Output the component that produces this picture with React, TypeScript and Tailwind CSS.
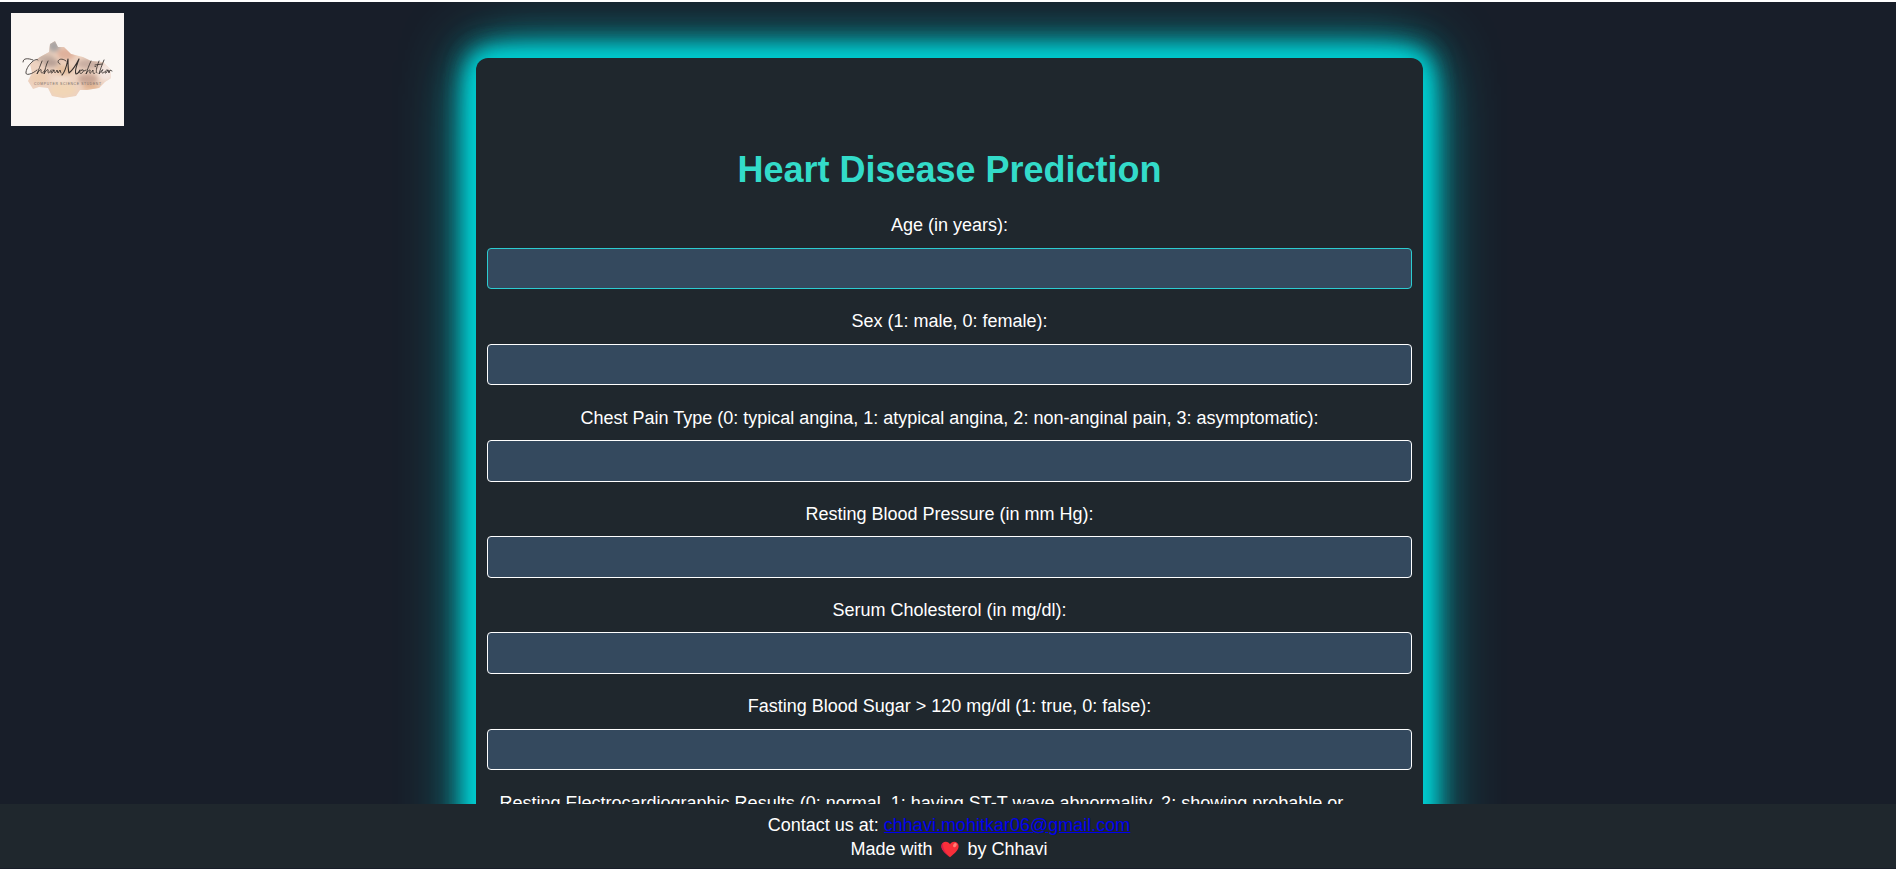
const fields = [
  'Age (in years):',
  'Sex (1: male, 0: female):',
  'Chest Pain Type (0: typical angina, 1: atypical angina, 2: non-anginal pain, 3: asymptomatic):',
  'Resting Blood Pressure (in mm Hg):',
  'Serum Cholesterol (in mg/dl):',
  'Fasting Blood Sugar > 120 mg/dl (1: true, 0: false):',
];

function Logo() {
  return (
    <svg viewBox="0 0 113 113" className="block h-[113px] w-[113px]" aria-label="Chhavi Mohitkar">
      <defs>
        <filter id="soft" x="-20%" y="-20%" width="140%" height="140%"><feGaussianBlur stdDeviation="2" /></filter>
        <filter id="edge"><feGaussianBlur stdDeviation="0.6" /></filter>
        <clipPath id="blob"><path d="M17 68 L21 60 L19 51 L29 44 L38 39 L39 31 L44 28 L47 34 L53 34 L60 41 L72 44 L80 48 L92 49 L99 56 L100 65 L94 69 L88 75 L76 77 L69 77 L65 83 L52 85 L41 83 L37 75 L28 74 L22 76 Z" /></clipPath>
      </defs>
      <rect width="113" height="113" fill="#faf6f3" />
      <g filter="url(#edge)"><g clipPath="url(#blob)">
        <rect width="113" height="113" fill="#edd2c0" />
        <g filter="url(#soft)">
          <ellipse cx="43" cy="33" rx="6" ry="6" fill="#a9a4a3" />
          <ellipse cx="34" cy="45" rx="10" ry="4" fill="#c9b3a6" />
          <ellipse cx="55" cy="41" rx="9" ry="6" fill="#dfb19b" />
          <ellipse cx="40" cy="50" rx="8" ry="4" fill="#b8a095" />
          <ellipse cx="78" cy="51" rx="12" ry="5" fill="#c9aea2" />
          <ellipse cx="53" cy="57" rx="8" ry="5" fill="#e4bf9f" />
          <ellipse cx="95" cy="59" rx="8" ry="9" fill="#f4e6e0" />
          <ellipse cx="28" cy="65" rx="9" ry="6" fill="#edceb2" />
          <ellipse cx="50" cy="66" rx="10" ry="3" fill="#f3dfd0" />
          <ellipse cx="77" cy="66" rx="10" ry="5" fill="#c8a594" />
          <ellipse cx="80" cy="74" rx="9" ry="3" fill="#e2b28e" />
          <ellipse cx="52" cy="77" rx="13" ry="7" fill="#f1d5b5" />
        </g>
      </g></g>
      <g fill="none" stroke="#342e2c" strokeWidth="0.85" strokeLinecap="round" strokeLinejoin="round">
        <path d="M12 49 C12 45 17 45 22 47 M27 47 C25 44 16 52 15 59 C14 64 23 60 26 57" />
        <path d="M31 48 C29 52 28 57 26 61 C28 57 31 55 30 58 C30 62 33 59 34 57 M37 48 C35 52 34 57 33 61 C35 57 38 55 37 58 C37 62 39 59 40 57 M43 57 C40 56 39 61 41 60 L43 57 C43 61 45 60 46 57 L47 60 L49 57 L50 60" />
        <path d="M55 48 C49 43 44 49 49 51" />
        <path strokeWidth="1.1" d="M51 62 C55 58 56 50 57 46 C57 52 57 57 58 60 C62 57 66 50 68 46 C66 52 63 58 65 61 C67 61 68 59 69 57" />
        <path d="M71 57 C68 57 68 62 71 60 C73 58 73 56 71 57 M73 58 L75 57 M80 48 C78 52 76 58 75 61 C77 57 80 56 79 58 C78 62 80 60 82 57 C82 59 82 62 84 60 M84 53.5 L84.5 53.5 M88 48 C86 53 84 60 86 60 M84 52 L91 51 M93 47 C91 52 89 57 88 61 C91 57 93 55 91 58 C90 59 92 62 93 59 M97 57 C94 56 93 61 95 60 L97 57 L98 60 L99 57 L101 58" />
      </g>
      <text x="23" y="71.5" textLength="67" fontSize="3.4" fontFamily="Liberation Sans, sans-serif" fill="#756b66">COMPUTER SCIENCE STUDENT</text>
    </svg>
  );
}

function Heart() {
  return (
    <svg viewBox="0 0 18 17" className="mx-[8.5px] inline-block h-[17px] w-[18px] align-[-3px]" aria-label="love">
      <path d="M9 16.2 C6 13.7 0.4 9.6 0.4 5.2 C0.4 2.4 2.4 0.7 4.8 0.7 C6.7 0.7 8.2 1.6 9 3.3 C9.8 1.6 11.3 0.7 13.2 0.7 C15.6 0.7 17.6 2.4 17.6 5.2 C17.6 9.6 12 13.7 9 16.2Z" fill="#f92f3a" />
      <path d="M9 16.2 C6 13.7 0.4 9.6 0.4 5.2 C0.4 3.4 1.2 2 2.4 1.4 C0.6 6 5 12.5 9 16.2Z" fill="#d81e4a" />
      <ellipse cx="13.9" cy="4.1" rx="1.6" ry="2.3" transform="rotate(35 13.9 4.1)" fill="#ff8178" />
    </svg>
  );
}

export default function App() {
  return (
    <div className="flex h-[869px] flex-col overflow-hidden border-t-2 border-white bg-[#181e29] font-['Liberation_Sans',Arial,sans-serif] text-[18px] text-white">
      <div className="flex min-h-0 flex-1 items-start overflow-hidden">
        <header className="w-[476px] shrink-0 pt-[11px] pl-[11px]"><Logo /></header>
        <main className="mt-14 h-[1500px] w-[947px] shrink-0 rounded-xl bg-[#1f272d] px-[11px] pt-[90px] text-center shadow-[0_0_20px_#00ced1,0_0_30px_#00ced1,0_0_30px_#00ced1,0_0_40px_#00ced1,0_0_70px_#00ced1]">
          <h1 className="text-[36px] leading-[44px] font-bold text-[#33dbc9]">Heart Disease Prediction</h1>
          <form className="mt-[22.3px]">
            {fields.map((label, i) => (
              <label key={label} className="block h-[96.2px]">
                <span className="block h-[33.45px] leading-[22px]">{label}</span>
                <input className={`block h-[41.45px] w-full rounded-[4px] border bg-[#34495e] px-3 outline-none ${i === 0 ? 'border-[#2cccd1]' : 'border-white'}`} />
              </label>
            ))}
            <p className="px-[12.5px] pt-px text-left leading-[22px] whitespace-nowrap">Resting Electrocardiographic Results (0: normal, 1: having ST-T wave abnormality, 2: showing probable or</p>
          </form>
        </main>
      </div>
      <footer className="relative h-[65px] shrink-0 border-b border-[#181e29] bg-[#1f272d] pt-[9px] pl-[2px] text-center leading-6">
        <p>Contact us at: <a href="mailto:chhavi.mohitkar06@gmail.com" className="text-[#0000ee] underline">chhavi.mohitkar06@gmail.com</a></p>
        <p>Made with<Heart />by Chhavi</p>
      </footer>
    </div>
  );
}
